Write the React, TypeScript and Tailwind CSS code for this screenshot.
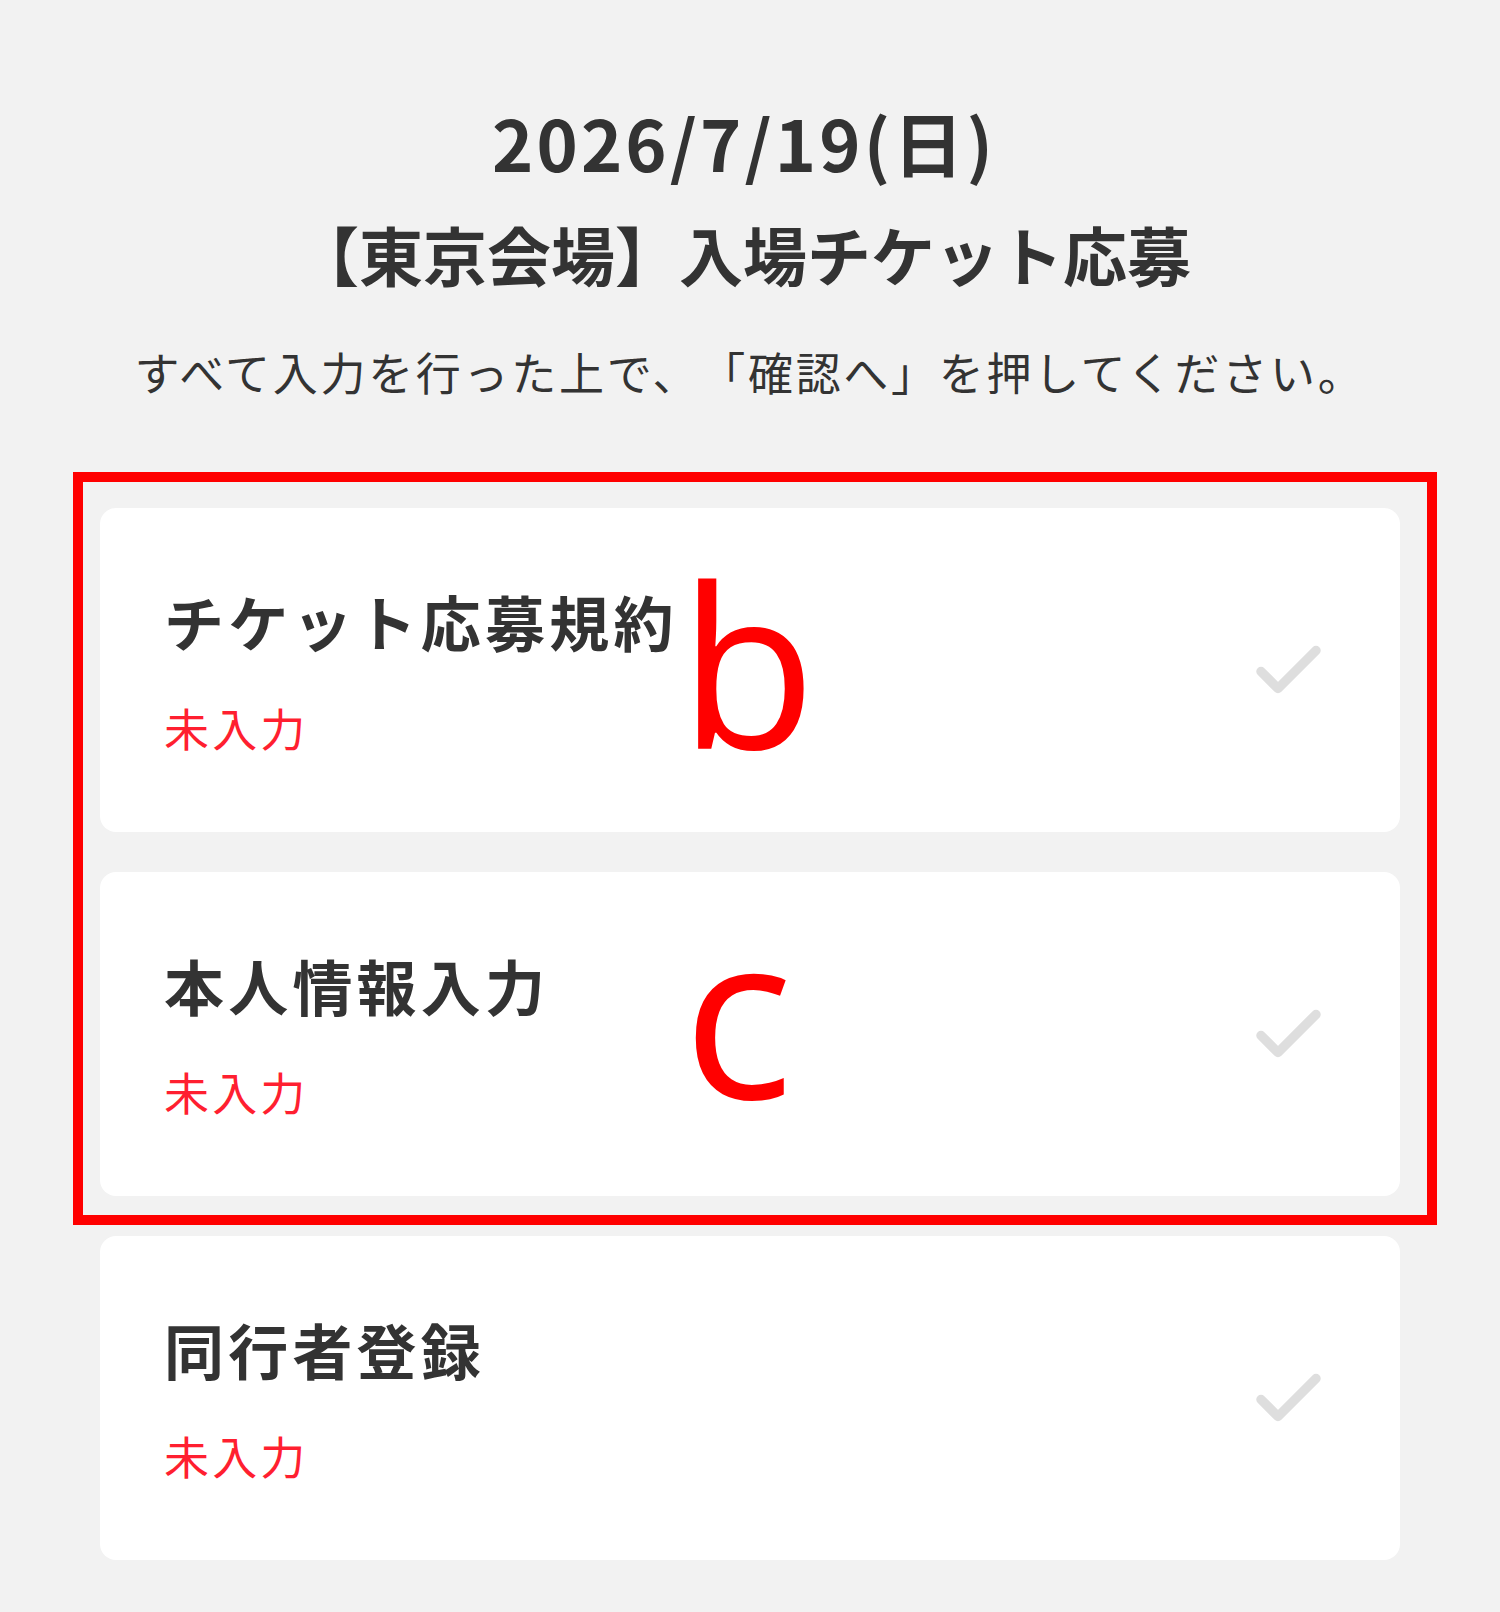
import React from 'react'

/* ─────────────────────────────────────────────────────────
   DATA
───────────────────────────────────────────────────────── */
const STEPS = [
  { id: 'terms', title: 'チケット応募規約', status: '未入力', mark: 'b' },
  { id: 'profile', title: '本人情報入力', status: '未入力', mark: 'c' },
  { id: 'companion', title: '同行者登録', status: '未入力', mark: '' },
]

const JP = { fontFamily: '"Noto Sans CJK JP", "Noto Sans", sans-serif' }

/* ─────────────────────────────────────────────────────────
   CHECK ICON
───────────────────────────────────────────────────────── */
function CheckMark() {
  return (
    <svg width="72" height="58" viewBox="0 0 72 58" fill="none" className="shrink-0">
      <path
        d="M8 30.5 L25 47.5 L63 9.5"
        stroke="#dedede"
        strokeWidth="9.5"
        strokeLinecap="round"
        strokeLinejoin="round"
      />
    </svg>
  )
}

/* ─────────────────────────────────────────────────────────
   STEP CARD
───────────────────────────────────────────────────────── */
function StepCard({ title, status, mark }: { title: string; status: string; mark: string }) {
  return (
    <div className="relative flex h-[324px] items-center justify-between rounded-[16px] bg-white pl-[64px] pr-[75px]">
      <div className="flex flex-col">
        <p className="text-[60px] font-bold leading-[60px] tracking-[0.07em] text-[#333333]">{title}</p>
        <p className="mt-[54px] text-[45px] leading-[45px] tracking-[0.07em] text-[#ff1f30]">{status}</p>
      </div>
      <CheckMark />

      {/* annotation letter */}
      {mark && (
        <span
          className={
            mark === 'b'
              ? 'pointer-events-none absolute left-[579px] top-[43px] text-[224px] font-medium leading-[224px] text-[#ff0000]'
              : 'pointer-events-none absolute left-[583px] top-[23px] text-[230px] font-medium leading-[230px] text-[#ff0000]'
          }
          style={{ fontFamily: '"Open Sans", sans-serif' }}
        >
          {mark}
        </span>
      )}
    </div>
  )
}

/* ─────────────────────────────────────────────────────────
   PAGE
───────────────────────────────────────────────────────── */
export default function App() {
  const [first, second, third] = STEPS

  return (
    <div className="min-h-screen w-full bg-[#f2f2f2] text-[#333333] [text-spacing-trim:space-all]" style={JP}>
      {/* Header */}
      <header className="flex flex-col items-center pt-[107px]">
        <h1 className="mr-[12px] text-[70px] font-bold leading-[70px] tracking-[0.045em]">2026/7/19(日)</h1>
        <h2 className="mr-[14px] mt-[44px] text-[64px] font-bold leading-[64px]">【東京会場】入場チケット応募</h2>
        <p className="mt-[64px] text-[45px] leading-[45px] tracking-[0.06em]">
          すべて入力を行った上で、「確認へ」を押してください。
        </p>
      </header>

      {/* Steps */}
      <main className="flex flex-col gap-[40px] px-[100px] pb-[52px] pt-[114px]">
        <div className="relative flex flex-col gap-[40px]">
          {/* red annotation frame */}
          <div className="pointer-events-none absolute -bottom-[29px] -left-[27px] -right-[37px] -top-[36px] border-[10px] border-[#ff0000]" />
          <StepCard {...first} />
          <StepCard {...second} />
        </div>
        <StepCard {...third} />
      </main>
    </div>
  )
}
